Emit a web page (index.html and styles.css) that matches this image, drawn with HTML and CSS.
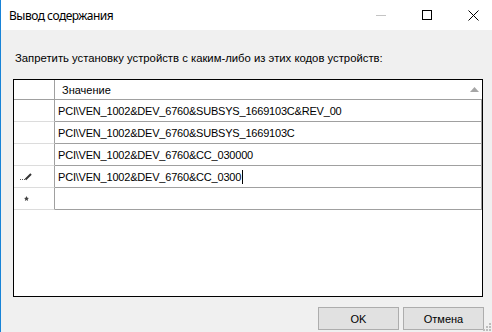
FILE: index.html
```html
<!DOCTYPE html>
<html lang="ru">
<head>
    <meta charset="UTF-8">
    <title>Вывод содержания</title>
    <link rel="stylesheet" href="styles.css">
</head>
<body>

<div class="window">
    <div class="titlebar">
        <span class="title">Вывод содержания</span>
        <div class="controls">
            <span class="ctl">
                <svg width="10" height="10" viewBox="0 0 10 10"><path d="M0 5.5H10" stroke="#c4c4c4" stroke-width="1"/></svg>
            </span>
            <span class="ctl">
                <svg width="10" height="10" viewBox="0 0 10 10"><rect x="0.5" y="0.5" width="9" height="9" fill="none" stroke="#000" stroke-width="1"/></svg>
            </span>
            <span class="ctl">
                <svg width="11" height="11" viewBox="0 0 11 11"><path d="M0.5 0.5L10.5 10.5M10.5 0.5L0.5 10.5" stroke="#000" stroke-width="1"/></svg>
            </span>
        </div>
    </div>

    <div class="content">
        <p class="label">Запретить установку устройств с каким-либо из этих кодов устройств:</p>

        <div class="grid">
            <div class="row head">
                <div class="rh"></div>
                <div class="cell">
                    <span>Значение</span>
                    <svg class="sort" width="9" height="5" viewBox="0 0 9 5"><path d="M4.5 0L9 5H0Z" fill="#a6a6a6"/></svg>
                </div>
            </div>
            <div class="row">
                <div class="rh"></div>
                <div class="cell">PCI\VEN_1002&amp;DEV_6760&amp;SUBSYS_1669103C&amp;REV_00</div>
            </div>
            <div class="row">
                <div class="rh"></div>
                <div class="cell">PCI\VEN_1002&amp;DEV_6760&amp;SUBSYS_1669103C</div>
            </div>
            <div class="row">
                <div class="rh"></div>
                <div class="cell">PCI\VEN_1002&amp;DEV_6760&amp;CC_030000</div>
            </div>
            <div class="row">
                <div class="rh">
                    <svg width="13" height="8" viewBox="0 0 13 8">
                        <rect x="0" y="6" width="1" height="1" fill="#555"/>
                        <rect x="2" y="6" width="1" height="1" fill="#555"/>
                        <rect x="4" y="6" width="1" height="1" fill="#555"/>
                        <path d="M5.5 6.5L11 1" stroke="#333" stroke-width="2"/>
                    </svg>
                </div>
                <div class="cell">PCI\VEN_1002&amp;DEV_6760&amp;CC_0300<span class="caret"></span></div>
            </div>
            <div class="row">
                <div class="rh">
                    <svg width="5" height="5" viewBox="0 0 5 5"><path d="M2.5 0L3.3 1.7L5 1.9L3.7 3.1L4.1 5L2.5 4L0.9 5L1.3 3.1L0 1.9L1.7 1.7Z" fill="#444"/></svg>
                </div>
                <div class="cell"></div>
            </div>
        </div>

        <div class="buttons">
            <button class="btn">OK</button>
            <button class="btn">Отмена</button>
        </div>

        <svg class="grip" width="8" height="8" viewBox="0 0 8 8">
            <rect x="6" y="0" width="2" height="2" fill="#bcbcbc"/>
            <rect x="3" y="3" width="2" height="2" fill="#bcbcbc"/>
            <rect x="6" y="3" width="2" height="2" fill="#bcbcbc"/>
            <rect x="0" y="6" width="2" height="2" fill="#bcbcbc"/>
            <rect x="3" y="6" width="2" height="2" fill="#bcbcbc"/>
            <rect x="6" y="6" width="2" height="2" fill="#bcbcbc"/>
        </svg>
    </div>
</div>

</body>
</html>
```

FILE: styles.css
```css
body {
    margin: 0;
    font-family: "Liberation Sans", Arial, sans-serif;
    font-size: 11px;
    color: #000;
}

.window {
    width: 491px;
    height: 332px;
    border-left: 1px solid #1883d7;
    display: flex;
    flex-direction: column;
    overflow: hidden;
}

.titlebar {
    height: 30px;
    background-color: #fff;
    display: flex;
    align-items: center;
    flex-shrink: 0;
}

.title {
    font-family: "Noto Sans", sans-serif;
    font-size: 12px;
    letter-spacing: -0.5px;
    padding-left: 8px;
    flex: 1;
}

.controls {
    display: flex;
    margin-right: -4px;
}

.ctl {
    width: 46px;
    height: 30px;
    display: flex;
    align-items: center;
    justify-content: center;
}

.content {
    flex: 1;
    background-color: #f0f0f0;
    padding: 22px 0 0 12px;
    position: relative;
}

.label {
    margin: 0 0 14px 2px;
    font-size: 11.3px;
    line-height: 13px;
}

.grid {
    width: 468px;
    height: 216px;
    border: 1px solid #000;
    background-color: #fff;
}

.row {
    display: flex;
    height: 22px;
}

.row.head {
    height: 20px;
}

.rh {
    width: 24px;
    padding-right: 16px;
    border-right: 1px solid #a0a0a0;
    border-bottom: 1px solid #dcdcdc;
    display: flex;
    align-items: center;
    justify-content: center;
}

.head .rh {
    border-bottom-color: #a0a0a0;
}

.cell {
    flex: 1;
    border-right: 1px solid #a0a0a0;
    border-bottom: 1px solid #a0a0a0;
    padding-left: 3px;
    display: flex;
    align-items: center;
    letter-spacing: -0.2px;
    white-space: nowrap;
}

.head .cell {
    padding-left: 7px;
    padding-right: 3px;
    letter-spacing: 0;
    justify-content: space-between;
    border-right: none;
}

.caret {
    display: inline-block;
    width: 1px;
    height: 14px;
    background-color: #000;
    margin-left: 1px;
}

.buttons {
    display: flex;
    justify-content: flex-end;
    gap: 4px;
    margin-top: 10px;
    padding-right: 8px;
}

.btn {
    width: 81px;
    height: 23px;
    background-color: #e1e1e1;
    border: 1px solid #adadad;
    font-family: "Liberation Sans", Arial, sans-serif;
    font-size: 11px;
    font-weight: normal;
    color: #000;
    padding: 0;
}

.grip {
    position: absolute;
    right: 1px;
    bottom: 1px;
}
```
